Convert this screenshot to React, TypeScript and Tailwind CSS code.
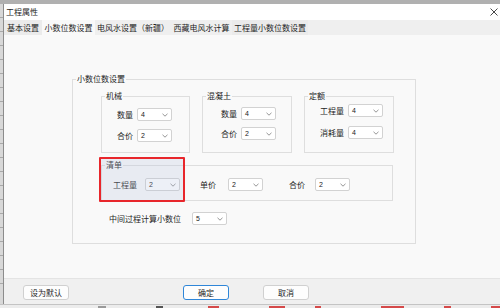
import React from "react";

const Chevron = () => (
  <svg width="6" height="4" viewBox="0 0 6 4" className="shrink-0">
    <path d="M0.5 0.8 L3 3.2 L5.5 0.8" fill="none" stroke="#7a7a7a" strokeWidth="0.8" />
  </svg>
);

const Sel = ({ v }: { v: string }) => (
  <div className="w-[35px] h-[13px] bg-white border border-[#d2d2d2] rounded-[2px] flex items-center justify-between pl-[3px] pr-[3px] shrink-0">
    <span className="text-[7px] leading-none text-[#222] font-['Liberation_Sans',sans-serif]">{v}</span>
    <Chevron />
  </div>
);

const Legend = ({ t }: { t: string }) => (
  <legend className="ml-[3px] px-[1px] text-[8px] leading-[10px] text-[#1e1e1e]">{t}</legend>
);

const Row = ({ label, v, lw }: { label: string; v: string; lw: string }) => (
  <div className="flex items-center gap-[4px]">
    <span className={`${lw} text-right text-[8px] leading-none`}>{label}</span>
    <Sel v={v} />
  </div>
);

export default function App() {
  const lines = Array.from({ length: 20 });
  return (
    <div className="w-[500px] h-[308px] overflow-hidden flex flex-col bg-[#d6d6d6] font-['Noto_Sans_CJK_SC','Noto_Sans',sans-serif] text-[#1e1e1e]">
      <div className="h-[4px] bg-[#b0b0b0] shrink-0" />
      <div className="flex flex-1 min-h-0">
        <div className="w-[3px] flex flex-col bg-[#d8d8d8]">
          {lines.map((_, i) => (
            <div key={i} className="h-[14px] shrink-0 border-b border-[#a8a8a8]" />
          ))}
        </div>
        <div className="flex-1 flex flex-col border-l border-[#8c8c8c]">
          {/* title bar */}
          <div className="h-[16px] bg-white flex items-center justify-between pl-[2px] pr-[2px] shrink-0">
            <span className="text-[8px] leading-none">工程属性</span>
            <svg width="8" height="8" viewBox="0 0 8 8">
              <path d="M0.5 0.5 L7.5 7.5 M7.5 0.5 L0.5 7.5" stroke="#333" strokeWidth="0.9" />
            </svg>
          </div>
          {/* tabs */}
          <div className="h-[15px] bg-[#efefef] flex items-stretch shrink-0 text-[8px] leading-none">
            <div className="w-[38px] flex items-center justify-center bg-[#ebebeb]">基本设置</div>
            <div className="w-[53px] flex items-center justify-center bg-[#f9f9f9]">小数位数设置</div>
            <div className="w-[76px] flex items-center justify-center">电风水设置（新疆）</div>
            <div className="w-[61px] flex items-center justify-center">西藏电风水计算</div>
            <div className="w-[76px] flex items-center justify-center bg-[#ebebeb]">工程量小数位数设置</div>
          </div>
          {/* content */}
          <div className="flex-1 bg-[#f9f9f9] pt-[39px] pl-[68px]">
            <fieldset className="w-[344px] h-[170px] border border-[#dedede]">
              <Legend t="小数位数设置" />
              <div className="pl-[28px] pt-[7px]">
                <div className="flex gap-[12px]">
                  <fieldset className="w-[89px] h-[62px] border border-[#dedede]">
                    <Legend t="机械" />
                    <div className="pl-[14px] pt-[7px] flex flex-col gap-[8px]">
                      <Row label="数量" v="4" lw="w-[17px]" />
                      <Row label="合价" v="2" lw="w-[17px]" />
                    </div>
                  </fieldset>
                  <fieldset className="w-[90px] h-[62px] border border-[#dedede]">
                    <Legend t="混凝土" />
                    <div className="pl-[17px] pt-[6px] flex flex-col gap-[7px]">
                      <Row label="数量" v="4" lw="w-[17px]" />
                      <Row label="合价" v="2" lw="w-[17px]" />
                    </div>
                  </fieldset>
                  <fieldset className="w-[90px] h-[62px] border border-[#dedede]">
                    <Legend t="定额" />
                    <div className="pl-[14px] pt-[3px] flex flex-col gap-[9px]">
                      <Row label="工程量" v="4" lw="w-[25px]" />
                      <Row label="消耗量" v="4" lw="w-[25px]" />
                    </div>
                  </fieldset>
                </div>
                <div className="relative mt-[7px] w-[292px]">
                  <fieldset className="w-[292px] h-[41px] border border-[#dedede]">
                    <Legend t="清单" />
                    <div className="pl-[11px] pt-[8px] flex items-center text-[8px] leading-none">
                      <span>工程量</span>
                      <div className="ml-[8px]"><Sel v="2" /></div>
                      <span className="ml-[20px]">单价</span>
                      <div className="ml-[12px]"><Sel v="2" /></div>
                      <span className="ml-[26px]">合价</span>
                      <div className="ml-[10px]"><Sel v="2" /></div>
                    </div>
                  </fieldset>
                  <div className="absolute left-[-2px] top-[-3px] w-[86px] h-[45px] border-2 border-[#e8262b] bg-[#b8c4e0]/25 rounded-[1px]" />
                </div>
                <div className="mt-[11px] ml-[8px] flex items-center text-[8px] leading-none">
                  <span>中间过程计算小数位</span>
                  <div className="ml-[11px]"><Sel v="5" /></div>
                </div>
              </div>
            </fieldset>
          </div>
          {/* bottom bar */}
          <div className="h-[26px] bg-[#f0f0f0] border-t border-[#e4e4e4] shrink-0 flex items-start pt-[6px] pl-[19px] text-[8px] leading-none">
            <button className="w-[46px] h-[15px] bg-[#fdfdfd] border border-[#d0d0d0] rounded-[3px] flex items-center justify-center">设为默认</button>
            <button className="ml-[114px] w-[46px] h-[15px] bg-[#fdfdfd] border-[1.5px] border-[#2f86d8] rounded-[3px] flex items-center justify-center">确定</button>
            <button className="ml-[34px] w-[46px] h-[15px] bg-[#fdfdfd] border border-[#d0d0d0] rounded-[3px] flex items-center justify-center">取消</button>
          </div>
        </div>
      </div>
      <div className="h-[4px] shrink-0 bg-[#ececec] flex items-center border-t border-[#c4c4c4]">
        <div className="ml-[98px] w-[10px] h-[2px] bg-[#9a9a9a]" />
        <div className="ml-[50px] w-[10px] h-[2px] bg-[#555]" />
        <div className="ml-[45px] w-[14px] h-[2px] bg-[#d54a4a]" />
        <div className="ml-[50px] w-[22px] h-[2px] bg-[#d54a4a]" />
        <div className="ml-[30px] w-[8px] h-[2px] bg-[#d54a4a]" />
        <div className="ml-[60px] w-[30px] h-[2px] bg-[#d54a4a]" />
        <div className="ml-[40px] w-[10px] h-[2px] bg-[#d54a4a]" />
        <div className="ml-[40px] w-[12px] h-[2px] bg-[#d54a4a]" />
      </div>
    </div>
  );
}
